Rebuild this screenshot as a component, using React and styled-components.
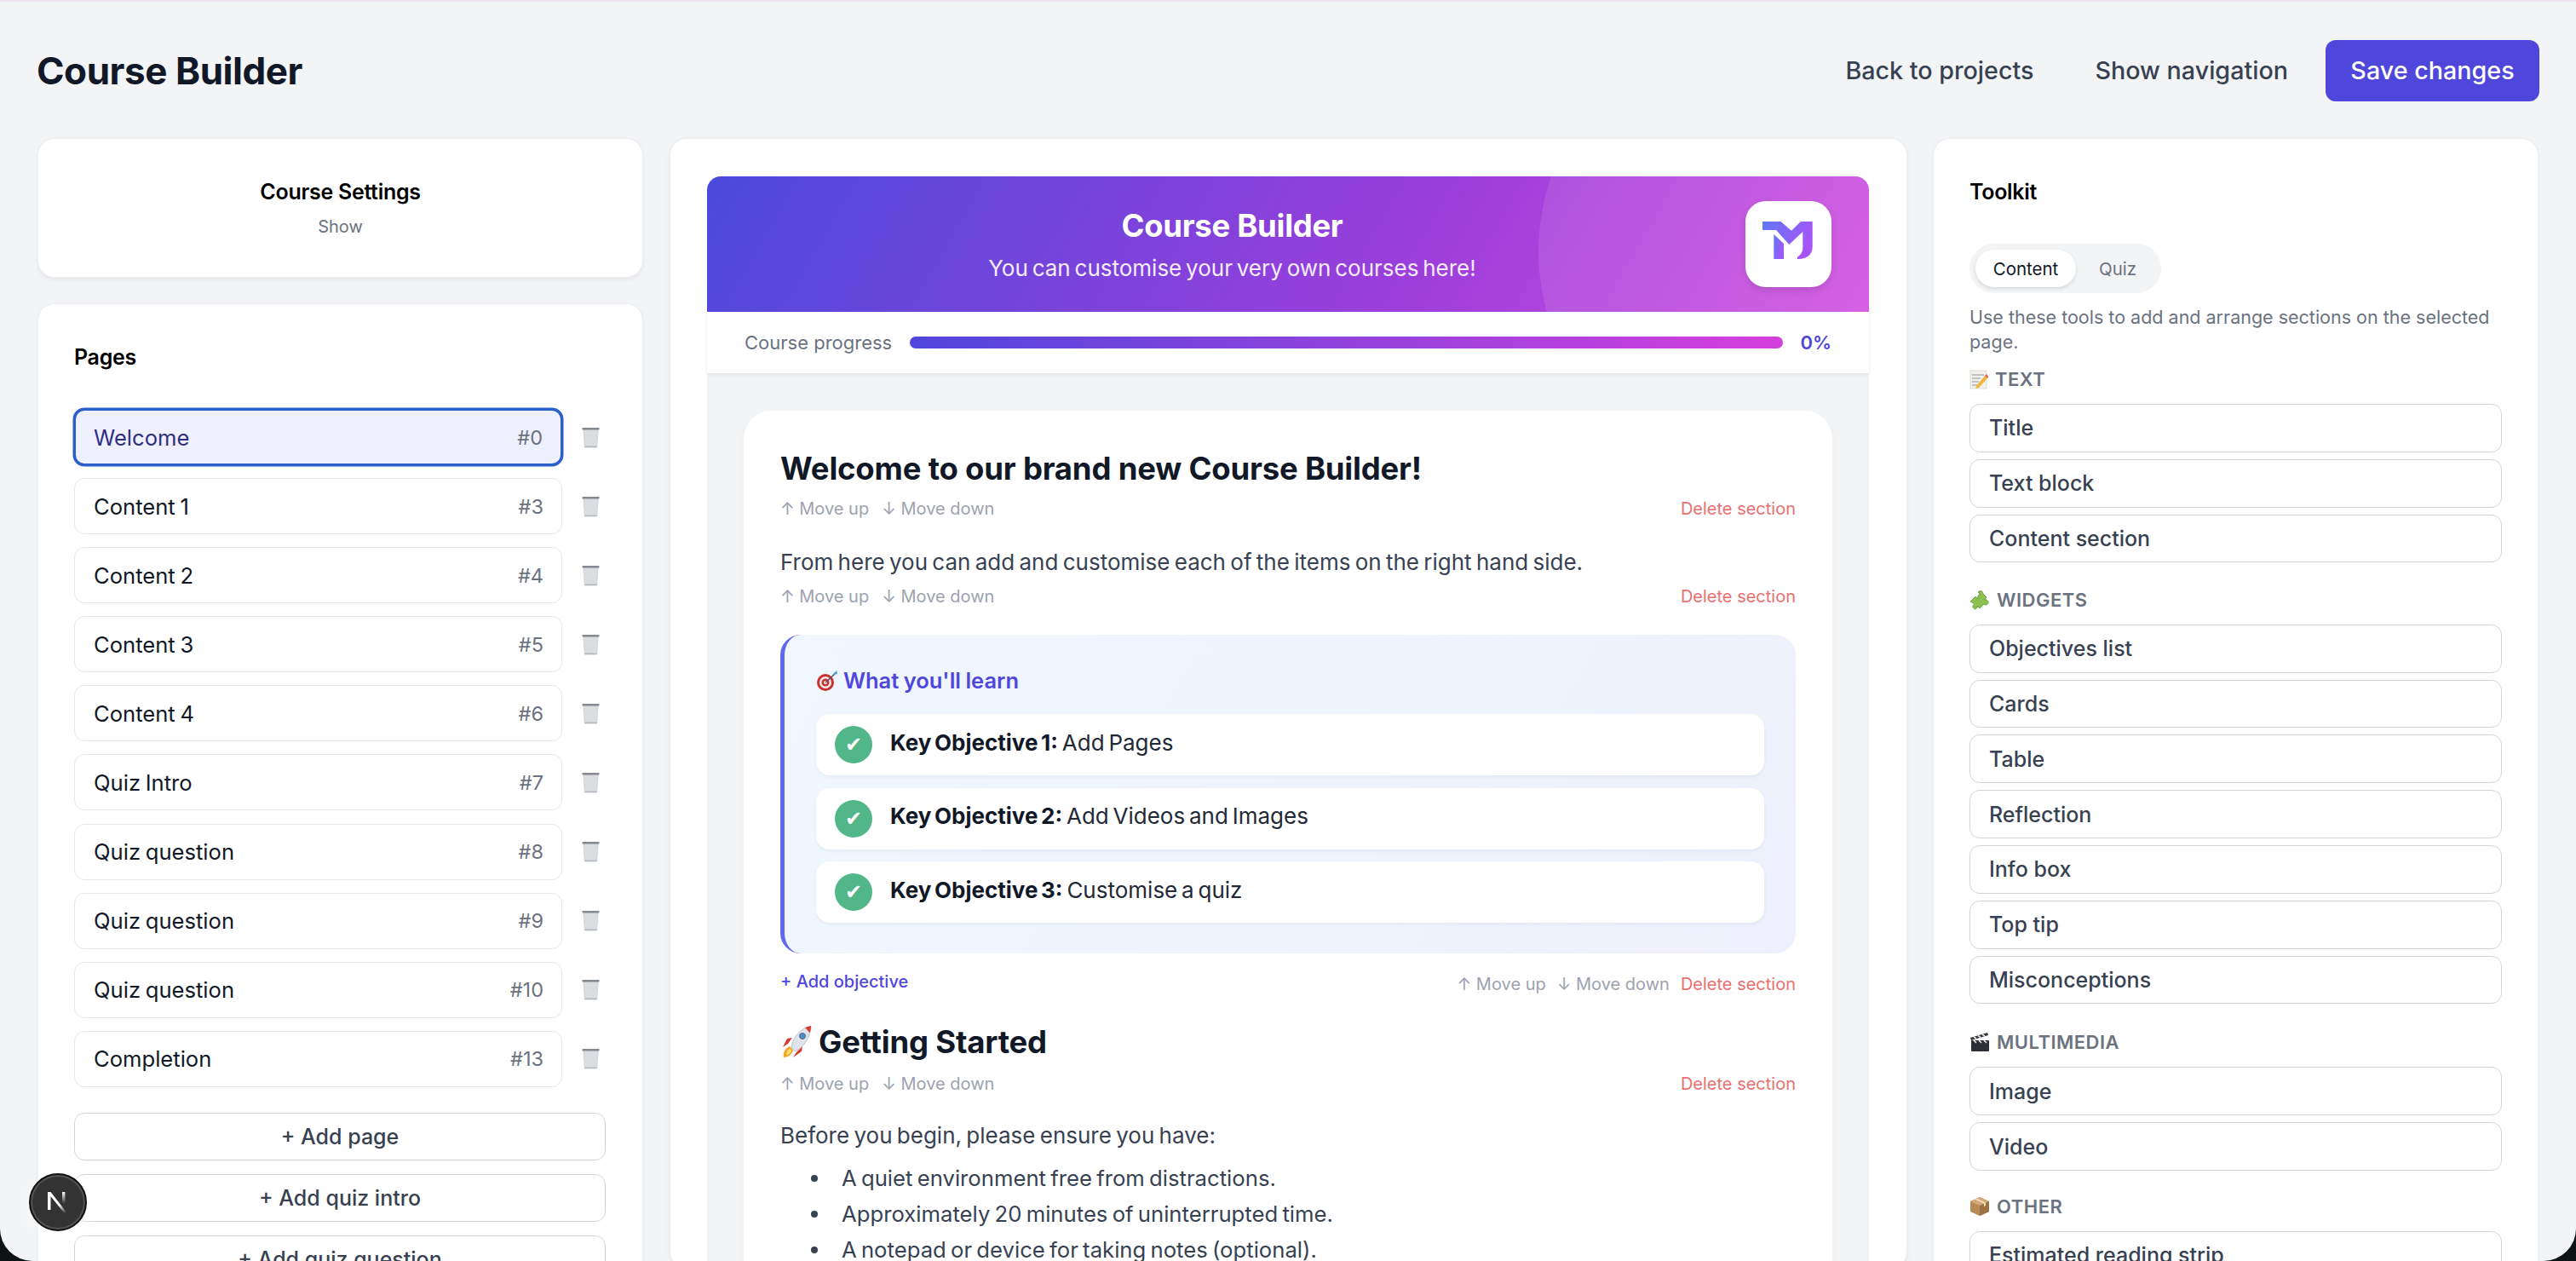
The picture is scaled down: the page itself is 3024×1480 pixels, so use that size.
import React from "react";
import styled, { createGlobalStyle } from "styled-components";

const Global = createGlobalStyle`
  html, body { margin: 0; padding: 0; background: #f3f4f6; overflow: hidden; }
  * { box-sizing: border-box; }
  body { font-family: Inter, "Liberation Sans", sans-serif; color: #111827; }
`;

const Frame = styled.div`
  position: relative;
  width: 3024px;
  height: 1480px;
  overflow: hidden;
  background: #f3f4f6;
  border-top: 2px solid #f0e4f0;
`;
const WindowCorners = styled.div`
  position: absolute;
  inset: -2px 0 0 0;
  border-radius: 0 0 38px 38px;
  box-shadow: 0 0 0 60px #0c1513;
  pointer-events: none;
  z-index: 20;
`;
const Header = styled.header`
  display: flex;
  align-items: center;
  justify-content: space-between;
  height: 72px;
  margin: 45px 43px 43px 43px;
`;
const PageTitle = styled.h1`
  margin: 0;
  font-size: 44px;
  line-height: 56px;
  font-weight: 700;
  color: #111827;
  letter-spacing: -0.45px;
`;
const HeaderActions = styled.div`
  display: flex;
  align-items: center;
`;
const GhostAction = styled.button`
  border: 0;
  background: none;
  padding: 0;
  margin-right: ${(p) => p.$gap}px;
  font: 500 28.7px/40px Inter, sans-serif;
  color: #374151;
`;
const SaveButton = styled.button`
  width: 251px;
  height: 72px;
  border: 0;
  border-radius: 12px;
  background: #4f46dc;
  color: #fff;
  font: 500 28.7px/40px Inter, sans-serif;
`;
const Columns = styled.div`
  display: grid;
  grid-template-columns: 712px 1453px 711px;
  column-gap: 30px;
  align-items: start;
  padding-left: 44px;
`;
const Column = styled.div`
  display: flex;
  flex-direction: column;
  gap: 30px;
  width: 711px;
`;
const Card = styled.section`
  background: #fff;
  border: 1px solid #eceef1;
  border-radius: 20px;
  box-shadow: 0 2px 5px rgba(0, 0, 0, 0.06);
`;
const SettingsCard = styled(Card)`
  height: 164px;
  display: flex;
  flex-direction: column;
  align-items: center;
  justify-content: center;
  gap: 11px;
`;
const CardTitle = styled.div`
  font-size: 25px;
  line-height: 32px;
  font-weight: 600;
  color: #000;
  letter-spacing: -0.3px;
`;
const ShowLabel = styled.div`
  font-size: 20px;
  line-height: 28px;
  color: #6b7280;
`;
const PagesCard = styled(Card)`
  padding: 46px 43px 44px 42px;
`;
const PageList = styled.div`
  display: flex;
  flex-direction: column;
  gap: 15.1px;
  margin-top: 45px;
`;
const PageRow = styled.div`
  display: flex;
  align-items: center;
  gap: 22px;
`;
const PageItem = styled.div`
  width: 573px;
  height: 66px;
  display: flex;
  align-items: center;
  justify-content: space-between;
  padding: 0 21px 0 22px;
  border-radius: 12px;
  background: ${(p) => (p.$active ? "#eef1fd" : "#fff")};
  box-shadow: ${(p) => (p.$active ? "0 0 0 1.5px #2b5fc9" : "none")};
  border: ${(p) => (p.$active ? "2px solid #2b5fc9" : "1.5px solid #e5e7eb")};
  padding-left: ${(p) => (p.$active ? 21 : 22)}px;
  font-size: 25.6px;
  word-spacing: -1.5px;
  color: ${(p) => (p.$active ? "#312e81" : "#111827")};
`;
const PageNumber = styled.span`
  font-size: 23.5px;
  color: #6b7280;
`;
const AddStack = styled.div`
  display: flex;
  flex-direction: column;
  gap: 16px;
  margin-top: 30px;
`;
const AddButton = styled.button`
  height: 56px;
  border: 1.5px solid #d1d5db;
  border-radius: 12px;
  background: #fff;
  font: 500 25px/36px Inter, sans-serif;
  color: #374151;
`;
const CenterCard = styled(Card)`
  padding: 44px 44px 0 43px;
`;
const Hero = styled.div`
  position: relative;
  height: 159px;
  display: flex;
  align-items: center;
  gap: 30px;
  padding: 0 44px;
  overflow: hidden;
  border-radius: 16px 16px 0 0;
  background: linear-gradient(120deg, #4b4adb 0%, #9d3edb 62%, #d24fe0 100%);
`;
const HeroCircle = styled.div`
  position: absolute;
  left: 976px;
  top: -177px;
  width: 530px;
  height: 530px;
  border-radius: 50%;
  background: rgba(255, 255, 255, 0.1);
`;
const HeroText = styled.div`
  position: relative;
  flex: 1;
  text-align: center;
  color: #fff;
`;
const HeroTitle = styled.div`
  font-size: 36.5px;
  line-height: 48px;
  font-weight: 700;
  letter-spacing: -0.3px;
`;
const HeroSub = styled.div`
  margin-top: 8px;
  font-size: 26px;
  line-height: 36px;
  word-spacing: -2.5px;
  color: #f6ecfc;
`;
const LogoTile = styled.div`
  position: relative;
  flex: none;
  width: 101px;
  height: 101px;
  border-radius: 24px;
  background: #fff;
  box-shadow: 0 4px 8px rgba(0, 0, 0, 0.12);
`;
const ProgressStrip = styled.div`
  position: relative;
  height: 72px;
  display: flex;
  align-items: center;
  padding: 0 44px;
  background: #fff;
  box-shadow: 0 2px 4px rgba(0, 0, 0, 0.07);
`;
const ProgressLabel = styled.span`
  font-size: 22px;
  color: #6b7280;
  width: 194px;
`;
const ProgressTrack = styled.div`
  flex: 1;
  height: 14px;
  border-radius: 7px;
  background: linear-gradient(90deg, #4f46dc, #d53fdc);
`;
const ProgressValue = styled.span`
  width: 57px;
  text-align: right;
  font-size: 22px;
  font-weight: 600;
  color: #4f46dc;
`;
const Stage = styled.div`
  background: #f3f4f6;
  padding: 44px 43px 0 43px;
`;
const Sheet = styled.article`
  background: #fff;
  border-radius: 32px 32px 0 0;
  padding: 44px 43px 0 43px;
  box-shadow: 0 2px 6px rgba(0, 0, 0, 0.03);
`;
const H2 = styled.h2`
  margin: ${(p) => p.$mt || 0}px 0 0;
  font-size: ${(p) => p.$size}px;
  line-height: 48px;
  font-weight: 700;
  color: #111827;
  letter-spacing: -0.2px;
  display: flex;
  align-items: center;
  gap: 7px;
`;
const Para = styled.p`
  margin: ${(p) => p.$mt}px 0 0;
  font-size: 26px;
  line-height: 40px;
  word-spacing: -2px;
  color: #374151;
`;
const ControlBar = styled.div`
  display: flex;
  justify-content: ${(p) => (p.$end ? "flex-end" : "space-between")};
  margin-top: ${(p) => p.$mt}px;
  gap: ${(p) => (p.$end ? 13 : 15)}px;
  font-size: 20px;
  line-height: 24px;
`;
const MoveGroup = styled.div`
  display: flex;
  gap: ${(p) => (p.$tight ? 13 : 15)}px;
  color: #9ca3af;
`;
const Danger = styled.span`
  color: #ea7070;
`;
const ObjectiveBox = styled.div`
  margin-top: 33px;
  padding: 40px 37px 36px;
  border-left: 5px solid #6366f1;
  border-radius: 24px;
  background: linear-gradient(120deg, #f0f7ff, #eef1fd);
`;
const ObjectiveTitle = styled.div`
  display: flex;
  align-items: center;
  gap: 6px;
  font-size: 25.5px;
  line-height: 28px;
  word-spacing: -1px;
  font-weight: 600;
  color: #4f46dc;
`;
const ObjectiveList = styled.div`
  display: flex;
  flex-direction: column;
  gap: 14.5px;
  margin-top: 25px;
`;
const ObjectiveItem = styled.div`
  height: 72px;
  display: flex;
  align-items: center;
  gap: 21px;
  padding: 0 22px;
  background: #fff;
  border-radius: 16px;
  box-shadow: 0 2px 4px rgba(0, 0, 0, 0.05);
  font-size: 26px;
  word-spacing: -2.5px;
  color: #374151;
`;
const ObjectiveText = styled.span`
  margin-top: -6px;
  color: #1f2937;
  & > b { font-weight: 700; color: #111827; }
`;
const CheckDot = styled.span`
  flex: none;
  width: 44px;
  height: 44px;
  border-radius: 50%;
  display: flex;
  align-items: center;
  justify-content: center;
  background: #52b788;
  color: #fff;
  font: 700 24px/1 "DejaVu Sans", sans-serif;
`;
const AddRow = styled.div`
  display: flex;
  justify-content: space-between;
  align-items: flex-start;
  margin-top: 20px;
`;
const AddObjective = styled.span`
  font-size: 20px;
  line-height: 26px;
  font-weight: 500;
  color: #4f46dc;
`;
const Bullets = styled.ul`
  list-style: none;
  margin: 8.5px 0 0;
  padding: 0 0 0 72px;
  font-size: 25.7px;
  line-height: 42px;
  word-spacing: -2px;
  color: #374151;
`;
const BulletItem = styled.li`
  position: relative;
  &::before {
    content: "";
    position: absolute;
    left: -36px;
    top: 17px;
    width: 8px;
    height: 8px;
    border-radius: 50%;
    background: #374151;
  }
`;
const ToolkitCard = styled(Card)`
  padding: 46px 42px 40px 42px;
`;
const Tabs = styled.div`
  display: inline-flex;
  width: 225px;
  height: 58px;
  margin-top: 45px;
  padding: 7px;
  border-radius: 29px;
  background: #f3f4f6;
`;
const Tab = styled.span`
  flex: none;
  width: ${(p) => (p.$active ? 118 : 98)}px;
  display: flex;
  align-items: center;
  justify-content: center;
  border-radius: 22px;
  font-size: 20.5px;
  background: ${(p) => (p.$active ? "#fff" : "transparent")};
  color: ${(p) => (p.$active ? "#111827" : "#6b7280")};
  box-shadow: ${(p) => (p.$active ? "0 2px 4px rgba(0,0,0,.12)" : "none")};
`;
const ToolkitHint = styled.p`
  margin: 14px 0 0;
  font-size: 21.5px;
  line-height: 29px;
  color: #6b7280;
`;
const GroupLabel = styled.div`
  display: flex;
  align-items: center;
  gap: 8px;
  margin-top: ${(p) => p.$mt}px;
  height: 30px;
  font-size: 22px;
  font-weight: 600;
  letter-spacing: 0.5px;
  color: #6b7280;
`;
const ToolStack = styled.div`
  display: flex;
  flex-direction: column;
  gap: 8px;
  margin-top: 14px;
`;
const ToolButton = styled.button`
  height: 56.8px;
  padding: 0 22px;
  text-align: left;
  border: 1.5px solid #d1d5db;
  border-radius: 12px;
  background: #fff;
  font: 500 25px/36px Inter, sans-serif;
  color: #374151;
`;
const DevBadge = styled.div`
  position: absolute;
  left: 34px;
  top: 1375px;
  width: 68px;
  height: 68px;
  display: flex;
  align-items: center;
  justify-content: center;
  border-radius: 50%;
  background: #333;
  border: 2px solid #111;
  box-shadow: inset 0 0 0 2px #555, 0 6px 24px rgba(255, 255, 255, 0.6);
  z-index: 10;
`;

const TrashIcon = () => (
  <svg width="23" height="25" viewBox="0 0 24 26" style={{ flex: "none" }}>
    <defs>
      <pattern id="mesh" width="3" height="3" patternUnits="userSpaceOnUse">
        <rect width="3" height="3" fill="#e6e8ea" />
        <path d="M0 3 L3 0" stroke="#b5b9be" strokeWidth=".7" />
      </pattern>
    </defs>
    <path d="M3 3 L21 3 L19.5 25 L4.5 25 Z" fill="url(#mesh)" stroke="#c0c4c8" strokeWidth=".6" />
    <rect x="1.5" y="1" width="21" height="2.6" rx="1" fill="#858a91" />
    <rect x="4.5" y="23.5" width="15" height="1.6" fill="#b4b9bf" />
  </svg>
);
const MemoIcon = () => (
  <svg width="22" height="24" viewBox="0 0 22 24">
    <rect x="1" y="2" width="19" height="21" fill="#f2f1ec" stroke="#c9c9c4" strokeWidth=".6" />
    <path d="M3 7h14M3 11h10M3 15h8M3 19h6" stroke="#8f9396" strokeWidth="1" />
    <path d="M8 20 L18 8 L21 11 L11 22 L7 23 Z" fill="#f2b63c" />
    <path d="M18 8 L20 6 L22.5 9 L21 11 Z" fill="#e6616a" />
  </svg>
);
const PuzzleIcon = () => (
  <svg width="24" height="24" viewBox="0 0 24 24">
    <path d="M1 14 L7 8 L10 11 C9 7 11 5 13 6 L10 3 C13 0 16 2 16 5 L20 9 L17 12 C20 11 23 13 22 16 C21 18 18 19 17 17 L12 22 L9 19 C10 22 7 24 5 22 C3 20 4 18 6 17 Z" fill="#8cc152" stroke="#5f9a3a" strokeWidth=".8" />
  </svg>
);
const ClapperIcon = () => (
  <svg width="24" height="24" viewBox="0 0 24 24">
    <rect x="2" y="10" width="21" height="13" rx="1" fill="#2c2f33" />
    <path d="M2 10 L22 4 L21 1 L1 7 Z" fill="#33373b" />
    <path d="M5 6 L8 8M10 4.500 L13 6.500M15 3 L18 5M5 10 l3 3M11 10 l3 3M17 10 l3 3" stroke="#e8e8e8" strokeWidth="1.6" />
  </svg>
);
const PackageIcon = () => (
  <svg width="24" height="24" viewBox="0 0 24 24">
    <path d="M12 1 L23 6 L23 18 L12 23 L1 18 L1 6 Z" fill="#b78a57" />
    <path d="M1 6 L12 11 L23 6 L12 1 Z" fill="#d4a976" />
    <path d="M12 11 L12 23 L23 18 L23 6 Z" fill="#9c7243" />
    <path d="M6 3.500 L17 8.500 L17 12 L19 11 L19 7.600 L8 2.600 Z" fill="#efe0c6" />
  </svg>
);
const TargetIcon = () => (
  <svg width="26" height="26" viewBox="0 0 26 26">
    <circle cx="11" cy="15" r="10" fill="#c9332f" />
    <circle cx="11" cy="15" r="7" fill="#f4ecea" />
    <circle cx="11" cy="15" r="4.500" fill="#c9332f" />
    <circle cx="11" cy="15" r="2" fill="#f4ecea" />
    <path d="M11 15 L22 5" stroke="#47595f" strokeWidth="1.500" />
    <path d="M19 6 L24 1 L25 5 Z" fill="#4da3b8" />
  </svg>
);
const RocketIcon = () => (
  <svg width="38" height="40" viewBox="0 0 38 40">
    <path d="M4 38 C3 32 6 27 11 25 L15 30 C13 35 9 38 4 38Z" fill="#f5a623" />
    <path d="M7 35 C7 32 9 29 11 28 L13 30 C12 33 10 35 7 35Z" fill="#fde26b" />
    <path d="M9 22 L3 26 L8 16 L14 15 Z" fill="#d93a2f" />
    <path d="M19 32 L15 38 L25 31 L26 25 Z" fill="#d93a2f" />
    <path d="M13 27 C14 14 24 4 36 1 C36 14 28 25 18 31 Z" fill="#dfe4ea" stroke="#98a4b0" strokeWidth=".6" />
    <path d="M29 3 L36 1 C36 4 35.500 7 34.500 9 Z" fill="#d93a2f" />
    <circle cx="26" cy="13" r="3.500" fill="#4c8dd0" stroke="#5a6570" strokeWidth="1" />
  </svg>
);
const BrandMark = () => (
  <svg width="101" height="101" viewBox="0 0 101 101">
    <defs>
      <linearGradient id="brand" x1="0" y1="0" x2="1" y2="0.4">
        <stop offset="0" stopColor="#5f78fb" />
        <stop offset="1" stopColor="#a655f5" />
      </linearGradient>
    </defs>
    <path
      d="M20 24 H41.500 L54 34.700 L65 24 H78.700 V54 C78.700 63 71 68 63 68 H61 V65.700 C65 63 67.300 60 67.300 54 V36 L51.300 51 L36 34 H20 Z"
      fill="url(#brand)"
    />
    <path d="M33.300 39 L45 50 V68 H33.300 Z" fill="url(#brand)" />
  </svg>
);
const NextMark = () => (
  <svg width="32" height="32" viewBox="0 0 32 32">
    <defs>
      <linearGradient id="nfade" x1="0.300" y1="0.200" x2="0.900" y2="1">
        <stop offset="0.500" stopColor="#fff" />
        <stop offset="1" stopColor="#fff" stopOpacity="0" />
      </linearGradient>
      <linearGradient id="nbar" x1="0" y1="0" x2="0" y2="1">
        <stop offset="0" stopColor="#fff" />
        <stop offset="0.800" stopColor="#fff" stopOpacity="0" />
      </linearGradient>
    </defs>
    <path d="M4 4 H7.500 L27 29 H23.500 L7.500 9 V25 H4 Z" fill="url(#nfade)" />
    <rect x="21" y="4" width="3.400" height="17" fill="url(#nbar)" />
  </svg>
);

const pages = [
  ["Welcome", "#0"], ["Content 1", "#3"], ["Content 2", "#4"], ["Content 3", "#5"], ["Content 4", "#6"],
  ["Quiz Intro", "#7"], ["Quiz question", "#8"], ["Quiz question", "#9"], ["Quiz question", "#10"], ["Completion", "#13"],
];
const objectives = [
  ["Key Objective 1:", "Add Pages"],
  ["Key Objective 2:", "Add Videos and Images"],
  ["Key Objective 3:", "Customise a quiz"],
];
const toolGroups = [
  { Icon: MemoIcon, name: "TEXT", mt: 14, tools: ["Title", "Text block", "Content section"] },
  { Icon: PuzzleIcon, name: "WIDGETS", mt: 28.5, tools: ["Objectives list", "Cards", "Table", "Reflection", "Info box", "Top tip", "Misconceptions"] },
  { Icon: ClapperIcon, name: "MULTIMEDIA", mt: 30, tools: ["Image", "Video"] },
  { Icon: PackageIcon, name: "OTHER", mt: 27, tools: ["Estimated reading strip"] },
];

const Moves = ({ tight }) => (
  <MoveGroup $tight={tight}>
    <span>↑ Move up</span>
    <span>↓ Move down</span>
  </MoveGroup>
);

export default function App() {
  return (
    <Frame>
      <Global />
      <Header>
        <PageTitle>Course Builder</PageTitle>
        <HeaderActions>
          <GhostAction $gap={72}>Back to projects</GhostAction>
          <GhostAction $gap={44}>Show navigation</GhostAction>
          <SaveButton>Save changes</SaveButton>
        </HeaderActions>
      </Header>
      <Columns>
        <Column>
          <SettingsCard>
            <CardTitle>Course Settings</CardTitle>
            <ShowLabel>Show</ShowLabel>
          </SettingsCard>
          <PagesCard>
            <CardTitle>Pages</CardTitle>
            <PageList>
              {pages.map(([name, num], i) => (
                <PageRow key={num}>
                  <PageItem $active={i === 0}>
                    {name}
                    <PageNumber>{num}</PageNumber>
                  </PageItem>
                  <TrashIcon />
                </PageRow>
              ))}
            </PageList>
            <AddStack>
              <AddButton>+ Add page</AddButton>
              <AddButton>+ Add quiz intro</AddButton>
              <AddButton>+ Add quiz question</AddButton>
            </AddStack>
          </PagesCard>
        </Column>
        <CenterCard>
          <Hero>
            <HeroCircle />
            <HeroText>
              <HeroTitle>Course Builder</HeroTitle>
              <HeroSub>You can customise your very own courses here!</HeroSub>
            </HeroText>
            <LogoTile>
              <BrandMark />
            </LogoTile>
          </Hero>
          <ProgressStrip>
            <ProgressLabel>Course progress</ProgressLabel>
            <ProgressTrack />
            <ProgressValue>0%</ProgressValue>
          </ProgressStrip>
          <Stage>
            <Sheet>
              <H2 $size={36.5}>Welcome to our brand new Course Builder!</H2>
              <ControlBar $mt={11}>
                <Moves />
                <Danger>Delete section</Danger>
              </ControlBar>
              <Para $mt={31}>From here you can add and customise each of the items on the right hand side.</Para>
              <ControlBar $mt={8}>
                <Moves />
                <Danger>Delete section</Danger>
              </ControlBar>
              <ObjectiveBox>
                <ObjectiveTitle>
                  <TargetIcon />
                  What you'll learn
                </ObjectiveTitle>
                <ObjectiveList>
                  {objectives.map(([key, text]) => (
                    <ObjectiveItem key={key}>
                      <CheckDot>✔</CheckDot>
                      <ObjectiveText>
                        <b>{key}</b> {text}
                      </ObjectiveText>
                    </ObjectiveItem>
                  ))}
                </ObjectiveList>
              </ObjectiveBox>
              <AddRow>
                <AddObjective>+ Add objective</AddObjective>
                <ControlBar $end $mt={4}>
                  <Moves tight />
                  <Danger>Delete section</Danger>
                </ControlBar>
              </AddRow>
              <H2 $size={36.5} $mt={32}>
                <RocketIcon />
                Getting Started
              </H2>
              <ControlBar $mt={13}>
                <Moves />
                <Danger>Delete section</Danger>
              </ControlBar>
              <Para $mt={29}>Before you begin, please ensure you have:</Para>
              <Bullets>
                <BulletItem>A quiet environment free from distractions.</BulletItem>
                <BulletItem>Approximately 20 minutes of uninterrupted time.</BulletItem>
                <BulletItem>A notepad or device for taking notes (optional).</BulletItem>
              </Bullets>
            </Sheet>
          </Stage>
        </CenterCard>
        <ToolkitCard>
          <CardTitle>Toolkit</CardTitle>
          <Tabs>
            <Tab $active>Content</Tab>
            <Tab>Quiz</Tab>
          </Tabs>
          <ToolkitHint>Use these tools to add and arrange sections on the selected page.</ToolkitHint>
          {toolGroups.map(({ Icon, name, mt, tools }) => (
            <div key={name}>
              <GroupLabel $mt={mt}>
                <Icon />
                {name}
              </GroupLabel>
              <ToolStack>
                {tools.map((t) => (
                  <ToolButton key={t}>{t}</ToolButton>
                ))}
              </ToolStack>
            </div>
          ))}
        </ToolkitCard>
      </Columns>
      <DevBadge>
        <NextMark />
      </DevBadge>
      <WindowCorners />
    </Frame>
  );
}
